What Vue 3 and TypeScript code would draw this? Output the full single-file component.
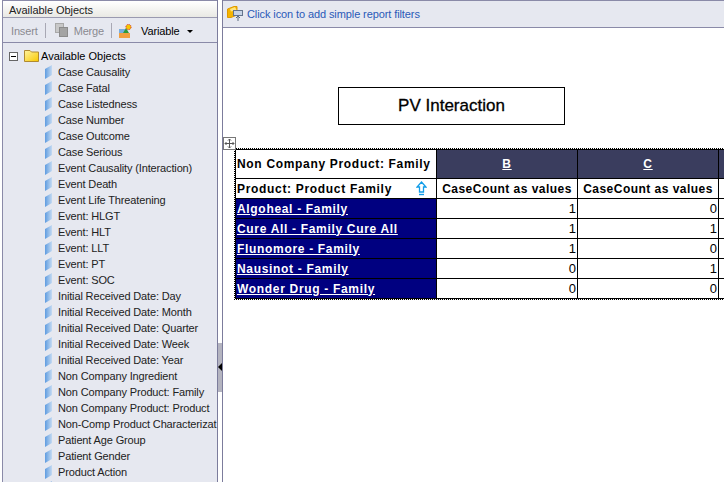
<script setup lang="ts">
const items: string[] = [
  'Case Causality','Case Fatal','Case Listedness','Case Number','Case Outcome','Case Serious',
  'Event Causality (Interaction)','Event Death','Event Life Threatening','Event: HLGT','Event: HLT','Event: LLT','Event: PT','Event: SOC',
  'Initial Received Date: Day','Initial Received Date: Month','Initial Received Date: Quarter','Initial Received Date: Week','Initial Received Date: Year',
  'Non Company Ingredient','Non Company Product: Family','Non Company Product: Product','Non-Comp Product Characterizat',
  'Patient Age Group','Patient Gender','Product Action'
]
const rows: { name: string; b: number; c: number }[] = [
  { name: 'Algoheal - Family', b: 1, c: 0 },
  { name: 'Cure All - Family Cure All', b: 1, c: 1 },
  { name: 'Flunomore - Family', b: 1, c: 0 },
  { name: 'Nausinot - Family', b: 0, c: 1 },
  { name: 'Wonder Drug - Family', b: 0, c: 0 }
]
</script>

<template>
  <div class="page">
    <aside class="left">
      <div class="title">Available Objects</div>
      <div class="toolbar">
        <span class="off">Insert</span>
        <span class="sep"></span>
        <svg class="ico" width="14" height="15" viewBox="0 0 14 15">
          <rect x="0.5" y="0.5" width="8" height="9" fill="#c8c8c8" stroke="#a8a8a8"/>
          <rect x="4.5" y="4.5" width="8" height="9" fill="#a4a4a4" stroke="#8c8c8c"/>
        </svg>
        <span class="off merge">Merge</span>
        <span class="sep sep2"></span>
        <svg class="ico var" width="13" height="14" viewBox="0 0 13 14">
          <rect x="0" y="9" width="11" height="5" fill="#f0a040"/>
          <rect x="0" y="5" width="6" height="4" fill="#78aee0"/>
          <path d="M4 9 L7 4 L10 9Z" fill="#2f9a3c"/>
          <circle cx="9.5" cy="3" r="2.6" fill="#f4c800" stroke="#d83030" stroke-dasharray="1.2 0.8"/>
        </svg>
        <span class="on">Variable</span>
        <span class="caret"></span>
      </div>
      <div class="tree">
        <div class="root">
          <span class="minus"></span>
          <svg width="16" height="14" viewBox="0 0 16 14">
            <defs>
              <linearGradient id="fd" x1="0" x2="1" y1="0" y2="1">
                <stop offset="0" stop-color="#fff3a0"/>
                <stop offset="1" stop-color="#f8c800"/>
              </linearGradient>
            </defs>
            <path d="M0.5 12.5V1.5H6L7.5 3H14.5V12.5Z" fill="url(#fd)" stroke="#b08a30"/>
          </svg>
          <span>Available Objects</span>
        </div>
        <div v-for="it in items" :key="it" class="item">
          <svg class="leaf" width="8" height="14" viewBox="0 0 8 14">
            <defs>
              <linearGradient id="lf" x1="0" x2="1" y1="0" y2="0">
                <stop offset="0" stop-color="#5f9ce0"/>
                <stop offset="1" stop-color="#c4daf2"/>
              </linearGradient>
            </defs>
            <path d="M0 4 L7 0 V10 L0 14Z" fill="url(#lf)"/>
          </svg>
          <span class="label">{{ it }}</span>
        </div>
        <div class="item">
          <svg class="leaf" width="8" height="14" viewBox="0 0 8 14">
            <path d="M0 4 L7 0 V10 L0 14Z" fill="#9cc0e8"/>
          </svg>
        </div>
      </div>
    </aside>
    <div class="splitter"><span class="grip"><i></i></span></div>
    <main class="main">
      <div class="filter">
        <svg width="16" height="15" viewBox="0 0 16 15">
          <path d="M0.5 3 L7 0.5 H10 V9 L4 11.5 H0.5Z" fill="#f5b400" stroke="#e09a00"/>
          <path d="M3 3 L8 1 L9.5 4 L4 5.5Z" fill="#ffe680"/>
          <rect x="6.5" y="4.5" width="9" height="5" fill="#c8d4e6" stroke="#64748c"/>
          <path d="M11 15V10M9 12L11 10L13 12" stroke="#5a6a80" fill="none"/>
        </svg>
        <span>Click icon to add simple report filters</span>
      </div>
      <div class="canvas">
        <div class="report-title">PV Interaction</div>
        <div class="table-wrap">
          <span class="move">
            <svg width="11" height="11" viewBox="0 0 11 11">
              <path d="M5.5 1V10M1 5.5H10M4 2.5L5.5 1L7 2.5M4 8.5L5.5 10L7 8.5M2.5 4L1 5.5L2.5 7M8.5 4L10 5.5L8.5 7" fill="none" stroke="#555"/>
            </svg>
          </span>
          <table class="grid">
            <colgroup>
              <col class="c0" /><col class="c1" /><col class="c1" /><col class="c2" />
            </colgroup>
            <tbody>
              <tr class="r-head">
                <td class="lead">Non Company Product: Family</td>
                <td class="dark"><u>B</u></td>
                <td class="dark"><u>C</u></td>
                <td class="dark"></td>
              </tr>
              <tr class="r-sub">
                <td class="lead">
                  <div class="sort">
                    <span>Product: Product Family</span>
                    <svg width="11" height="15" viewBox="0 0 11 15">
                      <path d="M5.5 1L10 6H7.5V11H3.5V6H1Z" fill="#fff" stroke="#109ce8" stroke-width="1.3"/>
                      <path d="M3 13.5H8" stroke="#109ce8" stroke-width="1.4"/>
                    </svg>
                  </div>
                </td>
                <td class="sub">CaseCount as values</td>
                <td class="sub">CaseCount as values</td>
                <td></td>
              </tr>
              <tr v-for="r in rows" :key="r.name" class="r-data">
                <td class="name"><u>{{ r.name }}</u></td>
                <td class="num">{{ r.b }}</td>
                <td class="num">{{ r.c }}</td>
                <td></td>
              </tr>
            </tbody>
          </table>
        </div>
      </div>
    </main>
  </div>
</template>

<style>
html, body { margin: 0; padding: 0; overflow: hidden; background: #fff; }
</style>

<style scoped>
.page {
  width: 724px;
  height: 482px;
  display: flex;
  overflow: hidden;
  font-family: "Liberation Sans", Arial, sans-serif;
  font-size: 11px;
  color: #000;
  padding-left: 2px;
  box-sizing: border-box;
}
.left {
  width: 215px;
  flex: none;
  box-sizing: border-box;
  border-top: 1px solid #8a8aa8;
  border-left: 1px solid #8a8aa8;
  background: #e6e8f0;
  display: flex;
  flex-direction: column;
  overflow: hidden;
}
.title {
  height: 16px;
  line-height: 18px;
  padding-left: 6px;
  background: linear-gradient(#ffffff, #e9e9e4);
  border-bottom: 1px solid #9a9ab0;
  color: #222;
  letter-spacing: -0.05px;
}
.toolbar {
  height: 25px;
  flex: none;
  display: flex;
  align-items: center;
  padding: 1px 0 0 8px;
  box-sizing: border-box;
  border-bottom: 1px solid #8a8aa8;
  letter-spacing: -0.15px;
}
.off { color: #8a8a90; }
.merge { margin-left: 5px; }
.on { margin-left: 9px; color: #000; }
.sep {
  width: 1px;
  height: 15px;
  background: #a8a8b4;
  margin: 0 9px 0 7px;
}
.sep2 { margin-right: 7px; }
.caret {
  margin-left: 8px;
  margin-top: 2px;
  border: 3px solid transparent;
  border-top-color: #000;
  border-bottom: 0;
}
.tree { padding: 5px 0 0 6px; }
.root {
  height: 16px;
  display: flex;
  align-items: center;
}
.minus {
  width: 7px;
  height: 7px;
  border: 1px solid #666;
  background: linear-gradient(#000, #000) center / 5px 1px no-repeat, #fff;
  margin-right: 6px;
}
.root svg { margin-right: 1px; }
.item {
  height: 16px;
  display: flex;
  align-items: center;
  padding-left: 36px;
  white-space: nowrap;
  color: #222;
  letter-spacing: -0.14px;
}
.leaf { flex: none; margin-right: 5px; }
.splitter {
  width: 6px;
  flex: none;
  box-sizing: border-box;
  background: #fff;
  border-left: 1px solid #7c7c9c;
  border-right: 1px solid #7c7c9c;
  position: relative;
}
.grip {
  position: absolute;
  left: 0;
  top: 343px;
  width: 4px;
  height: 49px;
  background: #b4b4c0;
}
.grip i {
  position: absolute;
  top: 20px;
  left: 0;
  border: 4px solid transparent;
  border-right-color: #000;
  border-left: 0;
}
.main {
  flex: 1;
  min-width: 0;
  display: flex;
  flex-direction: column;
  overflow: hidden;
}
.filter {
  height: 28px;
  box-sizing: border-box;
  flex: none;
  border-top: 1px solid #8a8aa8;
  border-bottom: 1px solid #8a8aa8;
  background: #e6e8f0;
  display: flex;
  align-items: center;
  padding: 0 0 1px 4px;
  gap: 4px;
  color: #2a5ab8;
  letter-spacing: -0.1px;
}
.canvas { flex: 1; padding-left: 12px; overflow: hidden; }
.report-title {
  width: 225px;
  height: 36px;
  margin: 59px 0 0 103px;
  border: 1px solid #000;
  text-align: center;
  line-height: 36px;
  font-size: 17px;
  color: #000;
  -webkit-text-stroke: 0.3px #000;
}
.table-wrap {
  position: relative;
  margin-top: 24px;
}
.move {
  position: absolute;
  left: -12px;
  top: -12px;
  width: 11px;
  height: 11px;
  border: 1px solid #777;
  background: #fff;
  display: flex;
}
.grid {
  border-collapse: collapse;
  table-layout: fixed;
  width: 494px;
  outline: 1px dotted #000;
  font-size: 12px;
  font-weight: bold;
  letter-spacing: 0.68px;
}
.c0 { width: 201px; }
.c1 { width: 141px; }
.c2 { width: 141px; }
.grid td {
  border: 1px solid #000;
  padding: 0 1px;
  white-space: nowrap;
  overflow: hidden;
}
.r-head td { height: 28px; }
.r-sub td { height: 19px; }
.r-data td { height: 19px; }
.dark { background: #3a3d5e; color: #fff; text-align: center; }
.grid .sub { text-align: center; letter-spacing: 0.47px; }
.sort { display: flex; justify-content: space-between; align-items: center; padding-right: 8px; }
.name { background: #000080; color: #fff; }
.num { text-align: right; font-weight: normal; font-size: 13px; letter-spacing: 0; }
</style>
